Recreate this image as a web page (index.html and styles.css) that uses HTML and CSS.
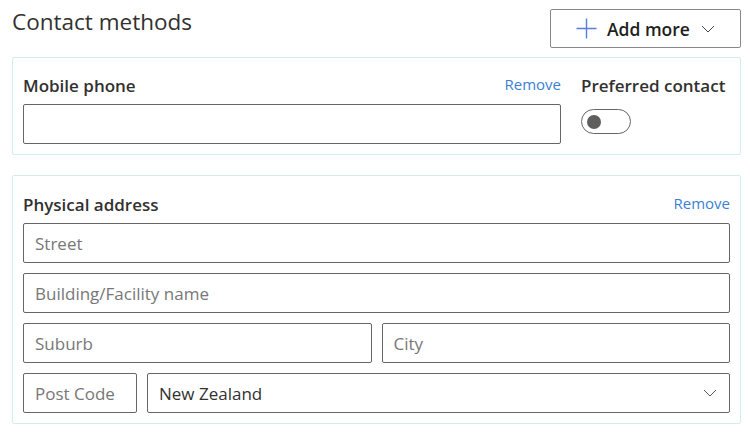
FILE: index.html
```html
<!DOCTYPE html>
<html lang="en">
<head>
<meta charset="utf-8">
<title>Contact methods</title>
<link rel="stylesheet" href="styles.css">
</head>
<body>
<div class="page">
  <div class="header">
    <h1 class="title">Contact methods</h1>
    <button class="add-btn" type="button">
      <svg class="plus" width="21" height="21" viewBox="0 0 21 21"><path d="M10.5 0.5v20M0.5 10.5h20" stroke="#5b7be0" stroke-width="1.4" fill="none"/></svg>
      <span class="add-label">Add more</span>
      <svg class="chev" width="14" height="8" viewBox="0 0 14 8"><path d="M1 1l6 6 6-6" stroke="#444" stroke-width="1" fill="none"/></svg>
    </button>
  </div>

  <section class="card card-phone">
    <div class="col-main">
      <div class="label-row">
        <span class="label">Mobile phone</span>
        <a class="remove" href="#">Remove</a>
      </div>
      <div class="field"></div>
    </div>
    <div class="col-side">
      <div class="label-row">
        <span class="label">Preferred contact</span>
      </div>
      <div class="toggle"><span class="knob"></span></div>
    </div>
  </section>

  <section class="card card-address">
    <div class="label-row">
      <span class="label">Physical address</span>
      <a class="remove" href="#">Remove</a>
    </div>
    <div class="rows">
      <div class="field"><span class="ph">Street</span></div>
      <div class="field"><span class="ph">Building/Facility name</span></div>
      <div class="row two">
        <div class="field"><span class="ph">Suburb</span></div>
        <div class="field"><span class="ph">City</span></div>
      </div>
      <div class="row postal">
        <div class="field post"><span class="ph">Post Code</span></div>
        <div class="field select"><span class="val">New Zealand</span>
          <svg class="chev" width="14" height="8" viewBox="0 0 14 8"><path d="M1 1l6 6 6-6" stroke="#555" stroke-width="1" fill="none"/></svg>
        </div>
      </div>
    </div>
  </section>
</div>
</body>
</html>
```

FILE: styles.css
```css
* { box-sizing: border-box; }
html, body { margin: 0; padding: 0; background: #fff; }
body {
  font-family: "Open Sans", "Noto Sans", sans-serif;
  color: #323130;
}
.page {
  padding: 9px 9px 0 12px;
}
.header {
  display: flex;
  justify-content: space-between;
  align-items: flex-start;
  height: 39px;
  margin-bottom: 9px;
}
.title {
  margin: 0;
  font-size: 22.5px;
  font-weight: 400;
  line-height: 26px;
  color: #323130;
}
.add-btn {
  width: 191px;
  height: 39px;
  border: 1px solid #8a8886;
  border-radius: 2px;
  background: #fff;
  display: flex;
  align-items: center;
  padding: 0 0 0 25px;
  font-family: inherit;
  cursor: pointer;
}
.plus { margin-right: 10px; flex: none; }
.add-label {
  font-size: 17.5px;
  font-weight: 600;
  color: #201f1e;
  margin-right: 11px;
}
.card {
  border: 1px solid #d3ecec;
  border-radius: 2px;
  padding: 10px;
}
.card-phone {
  display: flex;
  gap: 20px;
  margin-bottom: 20px;
}
.col-main { flex: 1; }
.col-side { width: 149px; }
.label-row {
  display: flex;
  justify-content: space-between;
  align-items: flex-end;
  height: 36px;
  padding-bottom: 8px;
}
.card-address .label-row { height: 37px; }
.label {
  font-size: 17px;
  font-weight: 600;
  color: #323130;
  line-height: 20px;
}
.remove {
  font-size: 15px;
  color: #3b7fd4;
  text-decoration: none;
  line-height: 20px;
  padding-bottom: 2px;
}
.field {
  height: 40px;
  border: 1px solid #666;
  border-radius: 2px;
  display: flex;
  align-items: center;
  padding: 0 11px;
  font-size: 17px;
}
.ph { color: #777; }
.val { color: #323130; flex: 1; }
.rows {
  display: flex;
  flex-direction: column;
  gap: 10px;
}
.row { display: flex; gap: 10px; }
.row.two .field { flex: 1; }
.post { width: 114px; flex: none; }
.select { flex: 1; padding-right: 12px; }
.toggle {
  margin-top: 5px;
  width: 50px;
  height: 25px;
  border: 1px solid #666;
  border-radius: 13px;
  position: relative;
}
.knob {
  position: absolute;
  left: 5px;
  top: 5px;
  width: 14px;
  height: 14px;
  border-radius: 50%;
  background: #5f5e5c;
}
```
